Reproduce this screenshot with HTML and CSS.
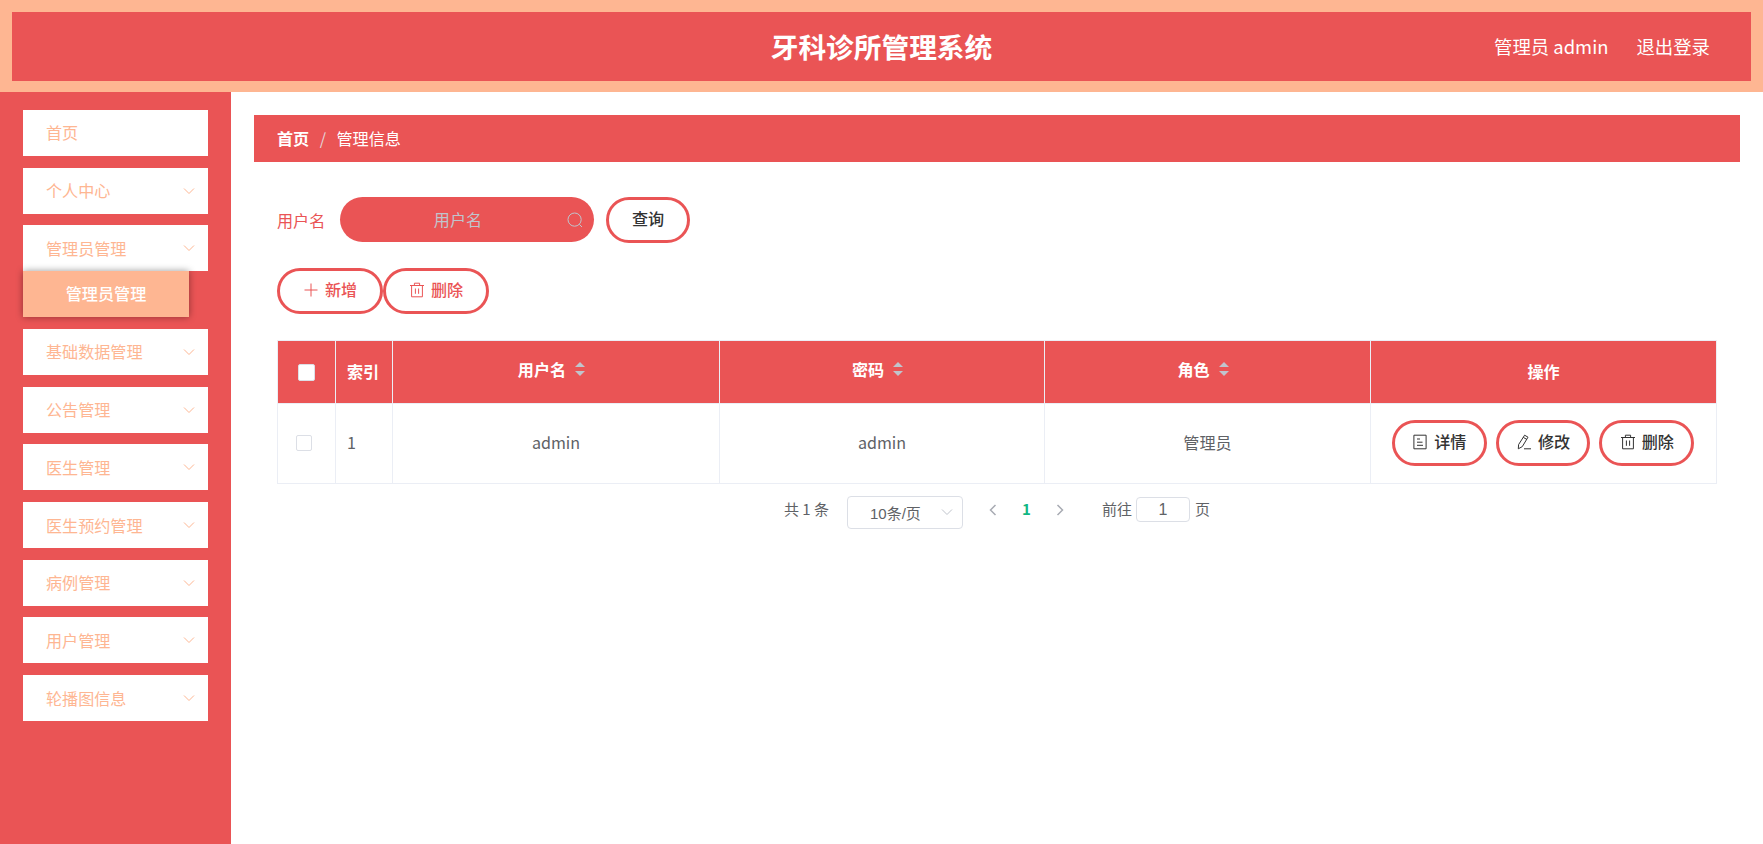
FILE: index.html
```html
<!DOCTYPE html>
<html lang="zh-CN">
<head>
    <meta charset="UTF-8">
    <meta name="viewport" content="width=device-width, initial-scale=1.0">
    <title>牙科诊所管理系统</title>
    <link rel="stylesheet" href="styles.css">
</head>
<body>
    <!-- shared icons -->
    <svg class="sprite" width="0" height="0">
        <symbol id="i-down" viewBox="0 0 16 16"><path d="M3 5.5l5 5 5-5"/></symbol>
        <symbol id="i-left" viewBox="0 0 16 16"><path d="M10.5 3l-5 5 5 5"/></symbol>
        <symbol id="i-right" viewBox="0 0 16 16"><path d="M5.5 3l5 5-5 5"/></symbol>
        <symbol id="i-plus" viewBox="0 0 16 16"><path d="M8 1.5v13M1.5 8h13"/></symbol>
        <symbol id="i-search" viewBox="0 0 16 16"><circle cx="7.6" cy="7.6" r="6.6"/><path d="M12.3 12.3l2.7 2.7"/></symbol>
        <symbol id="i-delete" viewBox="0 0 16 16"><path d="M1 3.5h14M2.6 3.5v11.3h10.8V3.5M5.4 3.5V1.2h5.2v2.3M6.4 6.5v5.3M9.6 6.5v5.3"/></symbol>
        <symbol id="i-doc" viewBox="0 0 16 16"><path d="M1.9 1.2h12.2v13.6H1.9zM5 5h3M5 8.2h5.5M5 11.3h6"/></symbol>
        <symbol id="i-edit" viewBox="0 0 16 16"><path d="M8.6 1.2l3.4 2-5.7 9.4-4 2.2.3-4.2zM7.3 3.4l3.5 2M8 14.8h7"/></symbol>
    </svg>

    <div class="header">
        <div class="header-inner">
            <div class="title">牙科诊所管理系统</div>
            <div class="user">
                <span>管理员 admin</span>
                <span>退出登录</span>
            </div>
        </div>
    </div>

    <div class="container">
        <div class="sidebar">
            <div class="menu-item">首页</div>
            <div class="menu-item">个人中心<svg class="icon"><use href="#i-down"/></svg></div>
            <div class="menu-item open">管理员管理<svg class="icon"><use href="#i-down"/></svg></div>
            <div class="sub-item">管理员管理</div>
            <div class="menu-item">基础数据管理<svg class="icon"><use href="#i-down"/></svg></div>
            <div class="menu-item">公告管理<svg class="icon"><use href="#i-down"/></svg></div>
            <div class="menu-item">医生管理<svg class="icon"><use href="#i-down"/></svg></div>
            <div class="menu-item">医生预约管理<svg class="icon"><use href="#i-down"/></svg></div>
            <div class="menu-item">病例管理<svg class="icon"><use href="#i-down"/></svg></div>
            <div class="menu-item">用户管理<svg class="icon"><use href="#i-down"/></svg></div>
            <div class="menu-item">轮播图信息<svg class="icon"><use href="#i-down"/></svg></div>
        </div>

        <div class="main">
            <div class="breadcrumb"><b>首页</b><span class="slash">/</span><span>管理信息</span></div>

            <div class="content">
                <div class="search-row">
                    <label class="search-label">用户名</label>
                    <div class="search-box">
                        <input class="search-input" type="text" placeholder="用户名">
                        <svg class="icon"><use href="#i-search"/></svg>
                    </div>
                    <button class="btn btn-query">查询</button>
                </div>

                <div class="action-row">
                    <button class="btn btn-red"><svg class="icon"><use href="#i-plus"/></svg>新增</button>
                    <button class="btn btn-red"><svg class="icon"><use href="#i-delete"/></svg>删除</button>
                </div>

                <table class="table">
                    <colgroup>
                        <col class="col-check"><col class="col-index"><col class="col-name"><col class="col-pass"><col class="col-role"><col>
                    </colgroup>
                    <thead>
                        <tr>
                            <th><span class="check"></span></th>
                            <th class="left">索引</th>
                            <th><div class="sortable">用户名<span class="sort"></span></div></th>
                            <th><div class="sortable">密码<span class="sort"></span></div></th>
                            <th><div class="sortable">角色<span class="sort"></span></div></th>
                            <th>操作</th>
                        </tr>
                    </thead>
                    <tbody>
                        <tr>
                            <td><span class="check"></span></td>
                            <td class="left">1</td>
                            <td>admin</td>
                            <td>admin</td>
                            <td>管理员</td>
                            <td>
                                <div class="row-btns">
                                    <button class="btn btn-row"><svg class="icon"><use href="#i-doc"/></svg>详情</button>
                                    <button class="btn btn-row"><svg class="icon"><use href="#i-edit"/></svg>修改</button>
                                    <button class="btn btn-row"><svg class="icon"><use href="#i-delete"/></svg>删除</button>
                                </div>
                            </td>
                        </tr>
                    </tbody>
                </table>

                <div class="pagination">
                    <span class="total">共 1 条</span>
                    <div class="page-size"><span>10条/页</span><svg class="icon"><use href="#i-down"/></svg></div>
                    <svg class="icon arrow"><use href="#i-left"/></svg>
                    <span class="page-num">1</span>
                    <svg class="icon arrow"><use href="#i-right"/></svg>
                    <span class="jump">前往</span>
                    <input class="jump-input" type="text" value="1">
                    <span>页</span>
                </div>
            </div>
        </div>
    </div>
</body>
</html>
```
FILE: styles.css
```css
* {
    box-sizing: border-box;
}
body {
    margin: 0;
    height: 844px;
    overflow: hidden;
    display: flex;
    flex-direction: column;
    background: #fff;
    color: #606266;
    font-family: "Noto Sans CJK SC", sans-serif;
    font-size: 16.1px;
}
.sprite {
    position: absolute;
}
.icon {
    width: 16px;
    height: 16px;
    fill: none;
    stroke: currentColor;
    stroke-width: 1;
    flex: none;
}

/* header */
.header {
    height: 92px;
    padding: 12px 12px 11px;
    background: #feb692;
}
.header-inner {
    height: 69px;
    padding: 0 41px;
    display: grid;
    grid-template-columns: 1fr auto 1fr;
    align-items: center;
    background: #ea5455;
    color: #fff;
}
.title {
    grid-column: 2;
    font-size: 27.7px;
    font-weight: 700;
    line-height: 69px;
}
.user {
    display: flex;
    justify-content: flex-end;
    gap: 28px;
    padding-bottom: 2px;
    font-size: 18.4px;
}

.container {
    flex: 1;
    display: flex;
}

/* sidebar */
.sidebar {
    width: 231px;
    padding: 17.9px 23px 0;
    background: #ea5455;
}
.menu-item {
    display: flex;
    align-items: center;
    justify-content: space-between;
    height: 46.2px;
    margin-bottom: 11.5px;
    padding: 0 11px 1px 23px;
    background: #fff;
    color: #feb692;
}
.menu-item .icon {
    margin-top: 1px;
}
.menu-item.open {
    margin-bottom: 0;
}
.sub-item {
    position: relative;
    width: 166px;
    height: 46px;
    margin-bottom: 11.4px;
    line-height: 45px;
    text-align: center;
    background: #feb692;
    color: #fff;
    font-weight: 500;
    box-shadow: 0 0 7px rgba(0, 0, 0, 0.4);
}

/* main */
.main {
    flex: 1;
    padding: 23px 23px 0;
}
.breadcrumb {
    display: flex;
    align-items: center;
    height: 46.5px;
    background: #ea5455;
    padding: 0 23px;
    color: #fff;
}
.slash {
    margin: 0 10.5px;
    color: #e4d5d8;
}
.content {
    padding: 35px 23px 0;
}
.search-row {
    display: flex;
    align-items: center;
    height: 46px;
}
.search-label {
    width: 63px;
    color: #ea5455;
}
.search-box {
    display: flex;
    align-items: center;
    width: 254px;
    height: 45px;
    margin-right: 12px;
    padding-right: 11px;
    border-radius: 23px;
    background: #ea5455;
    color: #c0c4cc;
}
.search-input {
    flex: 1;
    min-width: 0;
    padding: 0 0 2px 9px;
    border: 0;
    outline: 0;
    background: transparent;
    font: inherit;
    text-align: center;
}
.search-input::placeholder {
    color: #c0c4cc;
}
.btn {
    display: flex;
    align-items: center;
    justify-content: center;
    gap: 6px;
    height: 46px;
    padding: 0 0 3px;
    border: 3px solid #ea5455;
    border-radius: 23px;
    background: #fff;
    color: #333;
    font-family: inherit;
    font-size: 16.1px;
    font-weight: 500;
}
.btn .icon {
    margin-top: 2px;
}
.btn-query {
    width: 84px;
}
.btn-red {
    width: 106px;
    color: #ea5455;
}
.action-row {
    display: flex;
    margin: 25px 0 26px;
}

/* table */
.table {
    width: 1440px;
    table-layout: fixed;
    border-collapse: separate;
    border-spacing: 0;
    border: solid #ebeef5;
    border-width: 1px 0 0 1px;
}
.col-check {
    width: 58px;
}
.col-index {
    width: 57px;
}
.col-name {
    width: 327px;
}
.col-pass {
    width: 325px;
}
.col-role {
    width: 326px;
}
.table th,
.table td {
    padding: 0 0 2px;
    border: solid #ebeef5;
    border-width: 0 1px 1px 0;
    text-align: center;
}
.table th {
    height: 63px;
    background: #ea5455;
    color: #fff;
}
.table td {
    height: 80px;
}
.table .left {
    padding-left: 11px;
    text-align: left;
}
.sortable {
    display: flex;
    align-items: center;
    justify-content: center;
    gap: 9px;
    padding: 0 9px 3px 0;
}
.sort {
    display: flex;
    flex-direction: column;
    gap: 4px;
}
.sort::before,
.sort::after {
    content: "";
    border: 5.8px solid transparent;
}
.sort::before {
    border-top: 0;
    border-bottom-color: #c0c4cc;
}
.sort::after {
    border-bottom: 0;
    border-top-color: #c0c4cc;
}
.check {
    display: block;
    width: 16px;
    height: 16px;
    margin: 2px 0 0 18px;
    border: 1px solid #dcdfe6;
    border-radius: 2px;
    background: #fff;
}
th .check {
    width: 17px;
    height: 17px;
    margin: 3px 0 0 20px;
}
.row-btns {
    display: flex;
    gap: 9px;
    padding: 2px 0 0 21px;
}
.btn-row {
    width: 94.7px;
    padding-bottom: 4px;
}

/* pagination */
.pagination {
    display: flex;
    align-items: center;
    margin: 13px 0 0 507px;
    height: 32px;
    font-size: 15px;
}
.pagination > span {
    padding-bottom: 8px;
}
.pagination > .icon,
.jump-input {
    margin-bottom: 6px;
}
.total {
    width: 63px;
}
.page-size {
    display: flex;
    align-items: center;
    justify-content: space-between;
    width: 116px;
    height: 33px;
    padding: 0 7px 1px 22px;
    border: 1px solid #dcdfe6;
    border-radius: 4px;
    font-family: "Liberation Sans", "Noto Sans CJK SC", sans-serif;
}
.page-size .icon {
    color: #c0c4cc;
}
.arrow {
    margin: 0 0 0 22px;
    color: #a8abb3;
    stroke-width: 1.5;
}
.page-num {
    width: 51px;
    margin-right: -22px;
    text-align: center;
    color: #11b683;
    font-weight: 700;
}
.jump {
    margin-left: 34px;
}
.jump-input {
    width: 54px;
    height: 25px;
    margin-right: 5px;
    margin-left: 4px;
    padding: 0;
    border: 1px solid #dcdfe6;
    border-radius: 4px;
    color: #606266;
    font: 16px "Liberation Sans", sans-serif;
    text-align: center;
}
```
